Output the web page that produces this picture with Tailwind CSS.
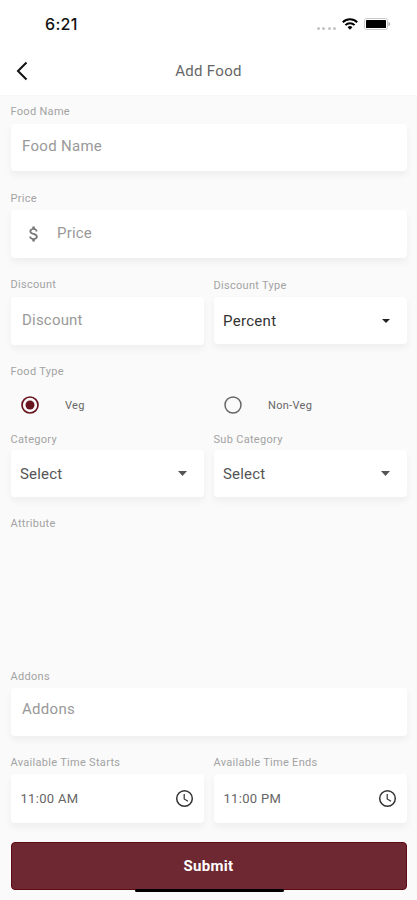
<!DOCTYPE html>
<html lang="en">
<head>
<meta charset="utf-8">
<meta name="viewport" content="width=device-width, initial-scale=1">
<title>Add Food</title>
<script src="https://cdn.jsdelivr.net/npm/@tailwindcss/browser@4"></script>
</head>
<body class="bg-[#fafafa] font-[Roboto,sans-serif]">
<div class="relative flex h-[900px] w-[417px] flex-col overflow-hidden">
  <header class="h-[95px] shrink-0 bg-white shadow-[0_1px_3px_rgba(0,0,0,0.02)]">
    <div class="flex h-12 items-center pl-[45px] pr-[26px]">
      <span class="font-[Inter,sans-serif] text-[16px] font-medium tracking-[0.3px] text-[#111]">6:21</span>
      <div class="ml-auto flex items-center">
        <div class="mr-[6px] mt-[8px] flex gap-[2.500px]">
          <i class="size-[3px] rounded-full bg-[#c4c4c4]"></i><i class="size-[3px] rounded-full bg-[#c4c4c4]"></i><i class="size-[3px] rounded-full bg-[#c4c4c4]"></i><i class="size-[3px] rounded-full bg-[#c4c4c4]"></i>
        </div>
        <svg class="mr-[6px] h-3 w-4" viewBox="0 0 16 12" fill="none" stroke="#000" stroke-width="2"><path d="M.8 4.3a10.3 10.3 0 0 1 14.4 0M3.4 7.1a6.5 6.5 0 0 1 9.2 0"/><path d="M8 11.8 5.6 9.3a3.4 3.4 0 0 1 4.8 0Z" fill="#000" stroke="none"/></svg>
        <svg class="h-3 w-[27px]" viewBox="0 0 27 12"><rect x=".5" y=".5" width="23" height="11" rx="2" fill="#fff" stroke="#c9c9c9"/><rect x="2" y="2" width="20" height="8" rx=".5" fill="#000"/><path d="M24.5 4v4c1-.3 1.600-1 1.600-2s-.6-1.700-1.600-2Z" fill="#aaa"/></svg>
      </div>
    </div>
    <div class="grid h-[46px] grid-cols-[1fr_auto_1fr] items-center">
      <svg class="ml-[16px] h-5 w-3" viewBox="0 0 12 20" fill="none" stroke="#111" stroke-width="2"><path d="M10.500 1.500 2 10l8.500 8.500"/></svg>
      <h1 class="text-[15px] leading-[18px] tracking-[0.3px] text-[#666]">Add Food</h1>
    </div>
  </header>
  <main class="flex flex-col px-[10.500px] pt-[9px] text-[11px] leading-4 tracking-[0.3px] text-[#a3a3a3]">
    <section class="h-[87px]">
      <p>Food Name</p>
      <div class="mt-[4px] flex h-[47px] items-center rounded-[4px] bg-white px-[11.500px] pb-[3px] text-[15px] text-[#999] shadow-[0_4px_7px_rgba(0,0,0,0.05)]">Food Name</div>
    </section>
    <section class="h-[86px]">
      <p>Price</p>
      <div class="mt-[3px] flex h-12 items-center rounded-[4px] bg-white pb-[2px] text-[15px] text-[#999] shadow-[0_4px_7px_rgba(0,0,0,0.05)]">
        <svg class="ml-[13px] mr-[13.500px] mt-[2px] size-5" viewBox="0 0 24 24" fill="#777"><path d="M11.800 10.900c-2.270-.59-3-1.200-3-2.150 0-1.090 1.010-1.850 2.700-1.850 1.780 0 2.440.85 2.500 2.100h2.210c-.07-1.720-1.120-3.300-3.210-3.810V3h-3v2.160c-1.940.42-3.500 1.680-3.500 3.610 0 2.310 1.910 3.460 4.700 4.130 2.500.6 3 1.480 3 2.410 0 .69-.49 1.790-2.700 1.790-2.060 0-2.870-.92-2.980-2.100h-2.200c.12 2.190 1.760 3.420 3.680 3.830V21h3v-2.150c1.950-.37 3.500-1.500 3.500-3.550 0-2.840-2.430-3.810-4.700-4.400z"/></svg>
        <span class="tracking-[0.2px]">Price</span>
      </div>
    </section>
    <section class="grid h-[87px] grid-cols-2 gap-x-[10px]">
      <div>
        <p>Discount</p>
        <div class="mt-[4px] flex h-12 items-center rounded-[4px] bg-white px-[11.500px] pb-[3px] text-[15px] tracking-[0.2px] text-[#999] shadow-[0_4px_7px_rgba(0,0,0,0.05)]">Discount</div>
      </div>
      <div>
        <p class="pt-px">Discount Type</p>
        <div class="mt-[3px] flex h-[47px] items-center justify-between rounded-[4px] bg-white pl-[9.500px] pr-[17px] text-[15px] text-[#333] shadow-[0_4px_7px_rgba(0,0,0,0.05)]"><span>Percent</span><svg class="h-[4px] w-[8px]" viewBox="0 0 8 4"><path d="M0 0h8L4 4Z" fill="#222"/></svg></div>
      </div>
    </section>
    <section class="h-[68px]">
      <p>Food Type</p>
      <div class="mt-[15px] grid h-5 grid-cols-2 gap-x-[10px] tracking-[0.300px] text-[#666]">
        <div class="flex items-center gap-[26.500px] pl-[10px]"><svg class="size-[18px]" viewBox="0 0 18 18"><circle cx="9" cy="9" r="8" fill="none" stroke="#67141f" stroke-width="1.700"/><circle cx="9" cy="9" r="4.500" fill="#67141f"/></svg><span class="pt-px">Veg</span></div>
        <div class="flex items-center gap-[26.500px] pl-[10px]"><svg class="size-[18px]" viewBox="0 0 18 18"><circle cx="9" cy="9" r="8" fill="none" stroke="#666" stroke-width="1.500"/></svg><span class="pt-px">Non-Veg</span></div>
      </div>
    </section>
    <section class="grid h-[84px] grid-cols-2 gap-x-[10px]">
      <div>
        <p>Category</p>
        <div class="mt-[2px] flex h-[47px] items-center justify-between rounded-[4px] bg-white pl-[9.500px] pr-[16.500px] text-[15px] tracking-[0.2px] text-[#555] shadow-[0_4px_7px_rgba(0,0,0,0.05)]"><span>Select</span><svg class="h-[5px] w-[9px]" viewBox="0 0 9 5"><path d="M0 0h9L4.500 5Z" fill="#555"/></svg></div>
      </div>
      <div>
        <p>Sub Category</p>
        <div class="mt-[2px] flex h-[47px] items-center justify-between rounded-[4px] bg-white pl-[9.500px] pr-[16.500px] text-[15px] tracking-[0.2px] text-[#555] shadow-[0_4px_7px_rgba(0,0,0,0.05)]"><span>Select</span><svg class="h-[5px] w-[9px]" viewBox="0 0 9 5"><path d="M0 0h9L4.500 5Z" fill="#555"/></svg></div>
      </div>
    </section>
    <section class="h-[153px]"><p>Attribute</p></section>
    <section class="h-[86px]">
      <p>Addons</p>
      <div class="mt-[3px] flex h-12 items-center rounded-[4px] bg-white px-[11.500px] pb-[6px] text-[15px] text-[#999] shadow-[0_4px_7px_rgba(0,0,0,0.05)]">Addons</div>
    </section>
    <section class="grid h-[87px] grid-cols-2 gap-x-[10px]">
      <div>
        <p>Available Time Starts</p>
        <div class="mt-[3px] flex h-[49px] items-center justify-between rounded-[4px] bg-white px-[10px] text-[13px] text-[#666] shadow-[0_4px_7px_rgba(0,0,0,0.05)]"><span>11:00 AM</span><svg class="size-[19px]" viewBox="0 0 19 19" fill="none" stroke="#333" stroke-width="1.500"><circle cx="9.500" cy="9.500" r="7.800"/><path d="M9.200 5v5l3.800 2.300" stroke-width="1.200"/></svg></div>
      </div>
      <div>
        <p>Available Time Ends</p>
        <div class="mt-[3px] flex h-[49px] items-center justify-between rounded-[4px] bg-white px-[10px] text-[13px] text-[#666] shadow-[0_4px_7px_rgba(0,0,0,0.05)]"><span>11:00 PM</span><svg class="size-[19px]" viewBox="0 0 19 19" fill="none" stroke="#333" stroke-width="1.500"><circle cx="9.500" cy="9.500" r="7.800"/><path d="M9.200 5v5l3.800 2.300" stroke-width="1.200"/></svg></div>
      </div>
    </section>
    <button class="h-12 rounded-[4px] border border-[#5f0914] bg-[#6e2831] text-[15px] font-bold text-white">Submit</button>
  </main>
  <div class="absolute left-[134.500px] top-[888.500px] h-[3.500px] w-[149px] rounded-full bg-black"></div>
</div>
</body>
</html>
